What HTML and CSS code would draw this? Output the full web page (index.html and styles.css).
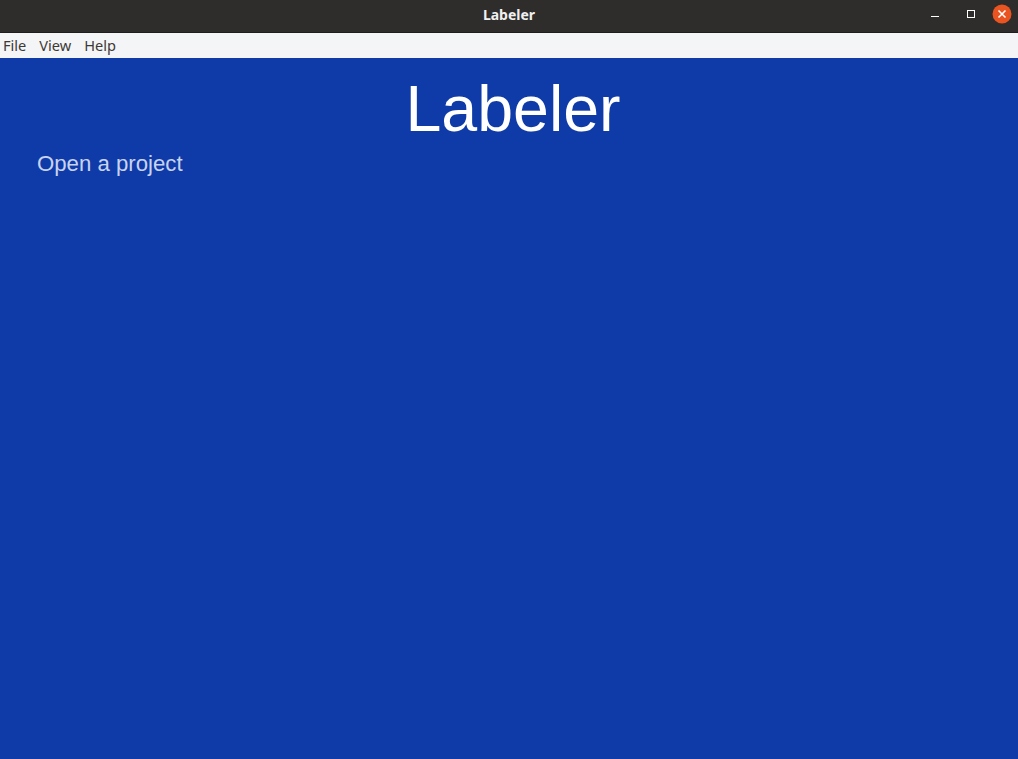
FILE: index.html
```html
<!DOCTYPE html>
<html>
<head>
<meta charset="utf-8">
<link rel="stylesheet" href="styles.css">
</head>
<body>
<div class="window">
  <header class="titlebar">
    <span class="title">Labeler</span>
    <div class="controls">
      <span class="ctl"><svg width="10" height="10" viewBox="0 0 10 10"><rect x="1" y="7" width="8" height="1" fill="#fff"/></svg></span>
      <span class="ctl"><svg width="10" height="10" viewBox="0 0 10 10"><rect x="1.5" y="1.5" width="7" height="7" fill="none" stroke="#fff" stroke-width="1"/></svg></span>
      <span class="close"><svg width="20" height="20" viewBox="0 0 20 20"><circle cx="10" cy="10" r="9.5" fill="#e95420"/><path d="M6.5 6.5 L13.5 13.5 M13.5 6.5 L6.5 13.5" stroke="#fff" stroke-width="1.6"/></svg></span>
    </div>
  </header>
  <nav class="menubar">
    <span class="menu">File</span>
    <span class="menu">View</span>
    <span class="menu">Help</span>
  </nav>
  <main class="content">
    <h1 class="heading">Labeler</h1>
    <p class="open">Open a project</p>
  </main>
</div>
</body>
</html>
```
FILE: styles.css
```css
html, body { margin: 0; padding: 0; height: 100%; }
body { font-family: "Liberation Sans", Arial, sans-serif; }
.window { display: flex; flex-direction: column; height: 759px; width: 1018px; overflow: hidden; }
.titlebar {
  height: 33px; background: #2e2d2b; position: relative;
  display: flex; align-items: center; justify-content: center;
  box-sizing: border-box; border-bottom: 1px solid #1f1e1d;
  padding-bottom: 3px;
}
.title { color: #f0f0f0; font-family: "Noto Sans", "DejaVu Sans", sans-serif; font-weight: 700; font-size: 14px; }
.controls { position: absolute; right: 6px; top: 4px; display: flex; align-items: center; }
.ctl { width: 34px; height: 20px; display: flex; align-items: center; justify-content: center; }
.ctl:first-child { margin-right: 2px; }
.close { width: 20px; height: 20px; display: flex; align-items: center; justify-content: center; margin-left: 4px; }
.menubar {
  height: 25px; background: #f4f5f7; display: flex; align-items: center;
  padding-left: 3px; gap: 13px;
  font-family: "Noto Sans", "DejaVu Sans", sans-serif; font-size: 14.6px; color: #3d3a36;
}
.menu { line-height: 25px; }
.content { flex: 1; background: #0f3ba9; display: flex; flex-direction: column; }
.heading {
  margin: 0; padding-top: 13px; padding-left: 8px; text-align: center; color: #ffffff;
  font-weight: 400; font-size: 64.5px; line-height: 76px;
}
.open {
  margin: 0; padding-left: 37px; padding-top: 4px; color: #c8d3ee; font-size: 22.2px; line-height: 26px;
}
```
